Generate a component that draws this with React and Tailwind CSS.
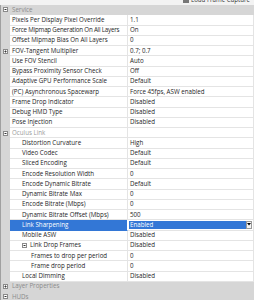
import React from "react";

const rows = [
  { type: "cat", name: "Service", icon: "minus" },
  { name: "Pixels Per Display Pixel Override", value: "1.1", lvl: 1 },
  { name: "Force Mipmap Generation On All Layers", value: "On", lvl: 1, tight: true },
  { name: "Offset Mipmap Bias On All Layers", value: "0", lvl: 1 },
  { name: "FOV-Tangent Multiplier", value: "0.7; 0.7", lvl: 1, gutter: "plus" },
  { name: "Use FOV Stencil", value: "Auto", lvl: 1 },
  { name: "Bypass Proximity Sensor Check", value: "Off", lvl: 1 },
  { name: "Adaptive GPU Performance Scale", value: "Default", lvl: 1 },
  { name: "(PC) Asynchronous Spacewarp", value: "Force 45fps, ASW enabled", lvl: 1 },
  { name: "Frame Drop Indicator", value: "Disabled", lvl: 1 },
  { name: "Debug HMD Type", value: "Disabled", lvl: 1 },
  { name: "Pose Injection", value: "Disabled", lvl: 1 },
  { name: "Oculus Link", value: "", lvl: 1, gutter: "minus", gray: true },
  { name: "Distortion Curvature", value: "High", lvl: 2 },
  { name: "Video Codec", value: "Default", lvl: 2 },
  { name: "Sliced Encoding", value: "Default", lvl: 2 },
  { name: "Encode Resolution Width", value: "0", lvl: 2 },
  { name: "Encode Dynamic Bitrate", value: "Default", lvl: 2 },
  { name: "Dynamic Bitrate Max", value: "0", lvl: 2 },
  { name: "Encode Bitrate (Mbps)", value: "0", lvl: 2 },
  { name: "Dynamic Bitrate Offset (Mbps)", value: "500", lvl: 2 },
  { name: "Link Sharpening", value: "Enabled", lvl: 2, selected: true },
  { name: "Mobile ASW", value: "Disabled", lvl: 2 },
  { name: "Link Drop Frames", value: "Disabled", lvl: 2, inner: "minus" },
  { name: "Frames to drop per period", value: "0", lvl: 3 },
  { name: "Frame drop period", value: "0", lvl: 3 },
  { name: "Local Dimming", value: "Disabled", lvl: 2 },
  { type: "cat", name: "Layer Properties", icon: "plus" },
  { type: "cat", name: "HUDs", icon: "minus" },
];

function Box({ kind }) {
  return (
    <svg width="5" height="5" viewBox="0 0 5 5" className="block">
      <rect x="0.5" y="0.5" width="4" height="4" fill="white" stroke="#8a8a8a" strokeWidth="1" />
      <line x1="1.5" y1="2.5" x2="3.5" y2="2.5" stroke="#333" strokeWidth="1" />
      {kind === "plus" && <line x1="2.5" y1="1.5" x2="2.5" y2="3.5" stroke="#333" strokeWidth="1" />}
    </svg>
  );
}

const pad = { 1: "pl-[2px]", 2: "pl-[12px]", 3: "pl-[21px]" };

export default function App() {
  return (
    <div
      className="w-[254px] h-[300px] overflow-hidden bg-[#f0f0f0] text-[6.2px] leading-none text-[#1e1e1e]"
      style={{ fontFamily: '"Open Sans", "Noto Sans", sans-serif' }}
    >
      <div className="h-[5px] relative overflow-hidden bg-[#f3f3f3]">
        <div className="absolute right-[4px] top-[-3px] flex items-center gap-[2px] text-[6.2px] text-[#333] whitespace-nowrap">
          <span className="w-[6px] h-[5px] bg-[#777] inline-block" />
          <span>Load Frame Capture</span>
        </div>
      </div>
      <div className="border-l border-[#a0a0a0]">
        {rows.map((r, i) => {
          if (r.type === "cat") {
            return (
              <div key={i} className="h-[10.25px] flex items-center bg-[#d6d6d6] border-b border-[#d6d6d6]">
                <div className="w-[9px] flex justify-center">
                  <Box kind={r.icon} />
                </div>
                <span className="pl-[2px] text-[#8c8c8c]">{r.name}</span>
              </div>
            );
          }
          return (
            <div key={i} className="h-[10.25px] flex">
              <div className="w-[9px] shrink-0 bg-[#d6d6d6] flex items-center justify-center">
                {r.gutter && <Box kind={r.gutter} />}
              </div>
              <div
                className={`w-[118px] shrink-0 flex items-center overflow-hidden border-b border-r ${
                  r.selected ? "bg-[#3377d6] text-white border-b-[#3377d6]" : "bg-white border-[#e4e4e4]"
                } ${pad[r.lvl]} ${r.gray ? "text-[#9a9a9a]" : ""}`}
              >
                {r.inner && (
                  <span className="mr-[3px]">
                    <Box kind={r.inner} />
                  </span>
                )}
                <span className={`whitespace-nowrap ${r.tight ? "tracking-[-0.2px]" : ""}`}>{r.name}</span>
              </div>
              {r.selected ? (
                <div className="flex-1 flex items-center bg-white border-b border-r border-[#e4e4e4] pl-[1px]">
                  <div className="flex-1 h-[8px] flex items-center bg-[#3377d6] text-white pl-[1px]">Enabled</div>
                  <div className="w-[6px] h-[8px] bg-[#f4f4f4] border border-[#9a9a9a] flex items-center justify-center mr-[1px]">
                    <svg width="4" height="3" viewBox="0 0 4 3"><path d="M0 0H4L2 2.5Z" fill="#000" /></svg>
                  </div>
                </div>
              ) : (
                <div className="flex-1 flex items-center bg-white border-b border-r border-[#e4e4e4] pl-[2px]">
                  <span className="whitespace-nowrap">{r.value}</span>
                </div>
              )}
            </div>
          );
        })}
      </div>
    </div>
  );
}
